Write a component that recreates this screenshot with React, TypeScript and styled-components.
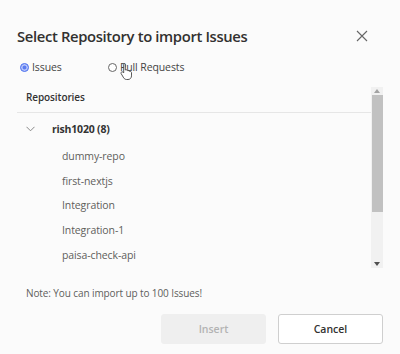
import React from "react";
import styled, { createGlobalStyle } from "styled-components";

const Global = createGlobalStyle`
  html, body { margin: 0; padding: 0; background: #fbfbfb; }
  body { font-family: "Open Sans", "Noto Sans", sans-serif; color: #323130; }
  * { box-sizing: border-box; }
`;

const Dialog = styled.div`
  width: 400px;
  height: 354px;
  background: #fbfbfb;
  padding: 22px 17px 0 17px;
  display: flex;
  flex-direction: column;
  position: relative;
`;

const Header = styled.div`
  display: flex;
  align-items: center;
  justify-content: space-between;
  height: 28px;
`;

const Title = styled.h1`
  margin: 0;
  font-size: 14.8px;
  font-weight: 600;
  color: #323130;
  letter-spacing: -0.35px;
`;

const Close = styled.button`
  border: none;
  background: transparent;
  padding: 0;
  margin-right: 14px;
  width: 14px;
  height: 14px;
  display: flex;
  align-items: center;
  justify-content: center;
`;

const RadioRow = styled.div`
  display: flex;
  align-items: center;
  height: 22px;
  margin-top: 6px;
  padding-left: 3px;
  position: relative;
`;

const RadioOption = styled.label<{ $w: number }>`
  display: flex;
  align-items: center;
  gap: 3px;
  width: ${(p) => p.$w}px;
  font-size: 10.5px;
  letter-spacing: -0.1px;
  color: #444;
`;

const RadioDot = styled.span<{ $checked?: boolean }>`
  width: 9px;
  height: 9px;
  border-radius: 50%;
  border: 1px solid ${(p) => (p.$checked ? "#5b7cf0" : "#666")};
  background: ${(p) => (p.$checked ? "#5b7cf0" : "#fff")};
  box-shadow: ${(p) => (p.$checked ? "inset 0 0 0 1.5px #b9c6fa" : "none")};
`;

const Cursor = styled.svg`
  position: absolute;
  left: 103px;
  top: 6px;
`;

const Body = styled.div`
  display: flex;
  margin-top: 9px;
  height: 181px;
`;

const List = styled.div`
  flex: 1;
  overflow: hidden;
`;

const ListHead = styled.div`
  height: 26px;
  display: flex;
  align-items: center;
  padding-left: 9px;
  padding-bottom: 6px;
  font-size: 10px;
  font-weight: 600;
  letter-spacing: -0.1px;
  color: #333;
  border-bottom: 1px solid #e6e6e6;
`;

const GroupRow = styled.div`
  height: 31px;
  display: flex;
  align-items: center;
  padding-left: 9px;
  padding-top: 1px;
  gap: 17px;
  font-size: 10.5px;
  font-weight: 700;
  letter-spacing: -0.2px;
  color: #333;
`;

const Item = styled.div`
  height: 24.6px;
  display: flex;
  align-items: center;
  padding-left: 45px;
  font-size: 10.5px;
  letter-spacing: -0.1px;
  color: #605e5c;
`;

const ScrollBar = styled.div`
  width: 12px;
  background: #f1f1f1;
  display: flex;
  flex-direction: column;
  align-items: center;
`;

const Arrow = styled.div`
  height: 8px;
  display: flex;
  align-items: center;
  justify-content: center;
`;

const Thumb = styled.div`
  width: 11px;
  height: 117px;
  background: #c1c1c1;
`;

const Spacer = styled.div`
  flex: 1;
`;

const Note = styled.div`
  margin-top: 18px;
  padding-left: 9px;
  font-size: 10px;
  letter-spacing: -0.1px;
  color: #605e5c;
  height: 16px;
`;

const Footer = styled.div`
  display: flex;
  justify-content: flex-end;
  gap: 12px;
  margin-top: 12px;
`;

const Btn = styled.button<{ $primary?: boolean }>`
  width: 105px;
  height: 30px;
  border-radius: 3px;
  font-family: inherit;
  font-size: 10.5px;
  font-weight: 600;
  border: 1px solid ${(p) => (p.$primary ? "#efefef" : "#cfcfcf")};
  background: ${(p) => (p.$primary ? "#efefef" : "#ffffff")};
  color: ${(p) => (p.$primary ? "#b3b3b3" : "#323130")};
`;

const repos = ["dummy-repo", "first-nextjs", "Integration", "Integration-1", "paisa-check-api"];

export default function App() {
  return (
    <>
      <Global />
      <Dialog>
        <Header>
          <Title>Select Repository to import Issues</Title>
          <Close aria-label="Close">
            <svg width="12" height="12" viewBox="0 0 12 12">
              <path d="M1 1L11 11M11 1L1 11" stroke="#666" strokeWidth="1.1" />
            </svg>
          </Close>
        </Header>
        <RadioRow>
          <RadioOption $w={88}>
            <RadioDot $checked />
            Issues
          </RadioOption>
          <RadioOption $w={120}>
            <RadioDot />
            Pull Requests
          </RadioOption>
          <Cursor width="14" height="18" viewBox="0 0 14 18">
            <path
              d="M4 1.5c.8 0 1.3.6 1.3 1.3V8l.6-.2c.8-.2 1.4.2 1.6.8l.5-.1c.8-.1 1.3.3 1.5.9l.4-.1c.9-.1 1.6.5 1.6 1.4v3.2c0 2-1.5 3.6-3.5 3.6H6.6c-1.2 0-2.2-.6-2.9-1.6L1.2 11.7c-.4-.6-.2-1.4.4-1.7.5-.3 1.1-.2 1.5.2l.6.7V2.8C2.7 2.1 3.2 1.5 4 1.5z"
              fill="#fff"
              stroke="#444"
              strokeWidth="0.9"
            />
          </Cursor>
        </RadioRow>
        <Body>
          <List>
            <ListHead>Repositories</ListHead>
            <GroupRow>
              <svg width="9" height="6" viewBox="0 0 9 6">
                <path d="M0.5 0.8L4.5 4.8L8.5 0.8" stroke="#888" strokeWidth="1" fill="none" />
              </svg>
              <span>rish1020 (8)</span>
            </GroupRow>
            {repos.map((r) => (
              <Item key={r}>{r}</Item>
            ))}
          </List>
          <ScrollBar>
            <Arrow>
              <svg width="6" height="4" viewBox="0 0 6 4">
                <path d="M3 0L6 4H0z" fill="#a3a3a3" />
              </svg>
            </Arrow>
            <Thumb />
            <Spacer />
            <Arrow>
              <svg width="6" height="4" viewBox="0 0 6 4">
                <path d="M0 0H6L3 4z" fill="#505050" />
              </svg>
            </Arrow>
          </ScrollBar>
        </Body>
        <Note>Note: You can import up to 100 Issues!</Note>
        <Footer>
          <Btn $primary disabled>
            Insert
          </Btn>
          <Btn>Cancel</Btn>
        </Footer>
      </Dialog>
    </>
  );
}
